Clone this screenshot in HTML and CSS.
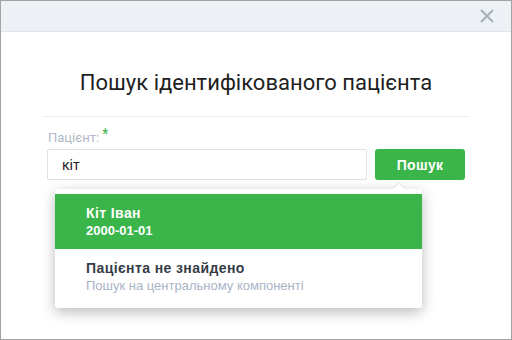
FILE: index.html
```html
<!DOCTYPE html>
<html lang="uk">
<head>
	<meta charset="UTF-8">
	<title>Пошук пацієнта</title>
	<link rel="stylesheet" href="styles.css">
</head>
<body>
	<div class="modal">
		<div class="modal-head">
			<button class="close" type="button" aria-label="Закрити">
				<svg width="14" height="14" viewBox="0 0 14 14"><path d="M1 1L13 13M13 1L1 13" stroke="#a7b0bf" stroke-width="2" fill="none"/></svg>
			</button>
		</div>
		<div class="modal-body">
			<h1 class="title">Пошук ідентифікованого пацієнта</h1>
			<div class="divider"></div>
			<form class="search">
				<label class="label">Пацієнт: <span class="req">*</span></label>
				<div class="row">
					<input class="field" type="text" value="кіт">
					<button class="btn" type="button">Пошук</button>
					<div class="dropdown">
						<div class="item active">
							<div class="name">Кіт Іван</div>
							<div class="sub">2000-01-01</div>
						</div>
						<div class="item">
							<div class="name">Пацієнта не знайдено</div>
							<div class="hint">Пошук на центральному компоненті</div>
						</div>
					</div>
				</div>
			</form>
		</div>
	</div>
</body>
</html>
```

FILE: styles.css
```css
*{
	margin:0;
	padding:0;
	box-sizing: border-box;
}
html,body{
	width: 100%;
	height: 100%;
}
body{
	background: #fff;
	font-family: Roboto, "Liberation Sans", sans-serif;
	overflow: hidden;
}
.modal{
	width: 512px;
	height: 340px;
	border: 1px solid #a3a3a3;
	background: #fff;
}
.modal-head{
	height: 31px;
	background: #edf0f5;
	border-bottom: 1px solid #dfe3ea;
	display: flex;
	justify-content: flex-end;
	align-items: center;
	padding-right: 17px;
}
.close{
	border: 0;
	background: none;
	width: 14px;
	height: 14px;
	display: flex;
}
.modal-body{
	padding: 36px 42px 0;
}
.title{
	font-weight: 400;
	font-size: 22px;
	line-height: 29px;
	color: #1f1f1f;
	text-align: center;
}
.divider{
	height: 1px;
	background: #eef0f4;
	margin-top: 19px;
}
.search{
	padding: 9px 4px 0;
}
.label{
	display: block;
	font-size: 13px;
	line-height: 16px;
	color: #b1b9c6;
	margin-left: 1px;
}
.req{
	color: #3ab54a;
	font-size: 14px;
	vertical-align: 3px;
}
.row{
	position: relative;
	display: flex;
	gap: 8px;
	margin-top: 3px;
}
.field{
	width: 320px;
	height: 31px;
	border: 1px solid #dde1e9;
	border-radius: 2px;
	padding: 0 14px;
	font-family: Roboto, sans-serif;
	font-size: 14px;
	color: #222;
	outline: none;
}
.btn{
	width: 90px;
	height: 31px;
	border: 0;
	border-radius: 3px;
	background: #3ab54a;
	color: #fff;
	font-family: "Liberation Sans", Arial, sans-serif;
	font-weight: 700;
	font-size: 14px;
	letter-spacing: .3px;
}
.dropdown{
	position: absolute;
	left: 8px;
	top: 40px;
	width: 367px;
	padding: 5px 0;
	background: #fff;
	border-radius: 3px;
	box-shadow: 0 4px 14px rgba(0,0,0,.28);
	font-family: "Liberation Sans", Arial, sans-serif;
}
.dropdown:before{
	content: "";
	position: absolute;
	right: 19px;
	top: -4px;
	width: 8px;
	height: 8px;
	background: #fff;
	transform: rotate(45deg);
	box-shadow: -1px -1px 1px rgba(0,0,0,.08);
}
.item{
	position: relative;
	padding: 10px 31px 0;
	height: 55px;
}
.item + .item{
	height: 54px;
}
.item.active{
	background: #3ab54a;
	color: #fff;
}
.name{
	font-weight: 700;
	font-size: 14px;
	line-height: 18px;
	letter-spacing: .4px;
	color: #353c47;
}
.active .name,.active .sub{
	color: #fff;
}
.sub{
	font-weight: 700;
	font-size: 13px;
	line-height: 18px;
}
.hint{
	font-size: 13px;
	line-height: 18px;
	color: #aab3c5;
}
```
